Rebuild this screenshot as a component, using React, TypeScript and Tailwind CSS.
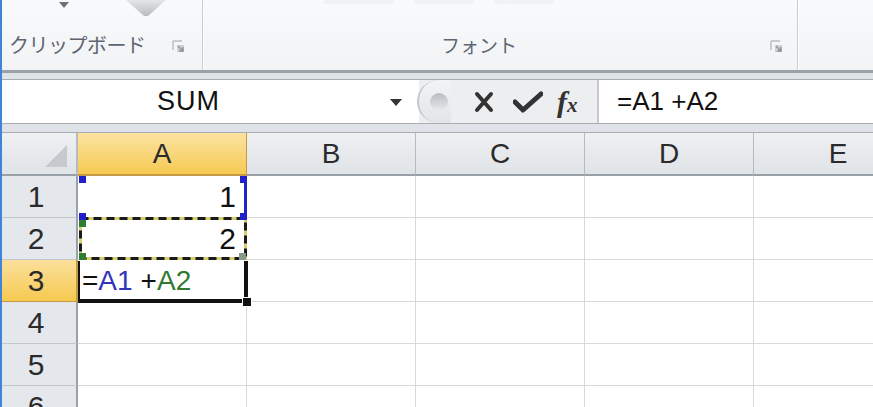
import React from "react";

const cols = ["A", "B", "C", "D", "E"];
const rows = [1, 2, 3, 4, 5, 6];

function Launcher() {
  return (
    <svg width="13" height="13" viewBox="0 0 13 13">
      <path d="M1 1h9M1 1v9" stroke="#b9bec5" strokeWidth="1.5" fill="none" />
      <rect x="5" y="5" width="7" height="7" fill="#cfd3d8" />
      <path d="M6 6l5 5M11 7v4H7" stroke="#8a9099" strokeWidth="1.4" fill="none" />
    </svg>
  );
}

function Ribbon() {
  return (
    <div className="flex h-[70px] bg-gradient-to-b from-[#f9fafb] to-[#f1f3f5]">
      {/* Clipboard group */}
      <div className="relative w-[200px] flex flex-col">
        <div className="h-[30px] relative">
          <svg className="absolute left-[57px] top-[2px]" width="10" height="6" viewBox="0 0 10 6">
            <path d="M0 0h10L5 6z" fill="#6b7079" />
          </svg>
          <svg className="absolute left-[124px] top-0" width="40" height="17" viewBox="0 0 40 17">
            <defs>
              <linearGradient id="pg" x1="0" y1="0" x2="0" y2="1">
                <stop offset="0" stopColor="#e4e6e8" />
                <stop offset="1" stopColor="#b9bcc0" />
              </linearGradient>
            </defs>
            <path d="M0 0h40L22 16h-4z" fill="url(#pg)" />
          </svg>
        </div>
        <div className="flex items-center h-[30px] pl-[7px]">
          <span
            className="text-[20px] text-[#5e6572] tracking-[-0.5px]"
            style={{ fontFamily: '"Noto Sans CJK JP", sans-serif' }}
          >
            クリップボード
          </span>
          <div className="ml-[26px] mt-[2px]">
            <Launcher />
          </div>
        </div>
      </div>
      <div className="w-[2px] h-[70px] border-l border-[#c9cdd2] bg-white" />
      {/* Font group */}
      <div className="relative w-[593px] flex flex-col">
        <div className="h-[30px] flex items-start gap-[20px] pl-[120px]">
          <div className="w-[70px] h-[4px] bg-[#f1f2f4]" />
          <div className="w-[60px] h-[4px] bg-[#f1f2f4]" />
          <div className="w-[60px] h-[4px] bg-[#f1f2f4]" />
        </div>
        <div className="flex items-center h-[30px]">
          <span
            className="ml-[237px] text-[19px] text-[#5e6572]"
            style={{ fontFamily: '"Noto Sans CJK JP", sans-serif' }}
          >
            フォント
          </span>
          <div className="ml-[253px] mt-[2px]">
            <Launcher />
          </div>
        </div>
      </div>
      <div className="w-[2px] h-[70px] border-l border-[#c9cdd2] bg-white" />
      <div className="flex-1" />
    </div>
  );
}

function FormulaBar() {
  return (
    <div
      className="flex h-[45px] bg-white border-y border-[#a8adb4]"
      style={{ fontFamily: '"Liberation Sans", Arial, sans-serif' }}
    >
      <div className="w-[403px] flex items-center relative">
        <span className="flex-1 text-center text-[27px] text-[#111] tracking-[1px] pr-[30px]">SUM</span>
        <svg className="absolute right-[3px] top-[19px]" width="12" height="7" viewBox="0 0 12 7">
          <path d="M0 0h12L6 7z" fill="#333" />
        </svg>
      </div>
      <div className="w-[14px] bg-white" />
      <div className="w-[178px] flex items-center bg-[#eceef0] relative">
        <div className="absolute -left-[2px] top-0 h-[43px] w-[34px] rounded-l-full border-l-2 border-[#c4c8cd] bg-gradient-to-b from-[#f3f4f5] to-[#e2e4e7] flex items-center justify-center">
          <div className="w-[18px] h-[18px] rounded-full bg-gradient-to-b from-[#b8bcc1] to-[#e9ebed] ml-[8px]" />
        </div>
        <svg className="ml-[55px]" width="20" height="22" viewBox="0 0 20 22">
          <path d="M3 3l14 16M17 3L3 19" stroke="#333" strokeWidth="4" strokeLinecap="round" />
        </svg>
        <svg className="ml-[19px]" width="30" height="22" viewBox="0 0 30 22">
          <path d="M2 11l8 8L28 3" stroke="#2f3337" strokeWidth="5" fill="none" strokeLinecap="round" strokeLinejoin="round" />
        </svg>
        <span
          className="ml-[14px] text-[30px] italic font-bold text-[#333] leading-none"
          style={{ fontFamily: '"Liberation Serif", serif' }}
        >
          f<span className="text-[21px]">x</span>
        </span>
      </div>
      <div className="w-[2px] bg-[#c5c9ce]" />
      <div className="flex-1 flex items-center pl-[18px] text-[26px] text-[#111]">
        =A1&nbsp;+A2
      </div>
    </div>
  );
}

function ColHeader({ c }: { c: string }) {
  const sel = c === "A";
  return (
    <div
      className={
        sel
          ? "flex items-center justify-center border-r border-b-2 border-[#c49b44] bg-gradient-to-b from-[#fbe3a0] to-[#f6c94e] text-[28px] text-[#2a2a2a]"
          : "flex items-center justify-center border-r border-b-2 border-r-[#b6bbc1] border-b-[#9aa0a7] bg-gradient-to-b from-[#eef0f2] to-[#e0e3e7] text-[28px] text-[#2a2a2a]"
      }
    >
      {c}
    </div>
  );
}

function RowHeader({ r }: { r: number }) {
  const sel = r === 3;
  return (
    <div
      className={
        sel
          ? "flex items-center justify-center pr-[6px] border-r-2 border-b border-[#c49b44] bg-gradient-to-b from-[#fbe09a] to-[#f6c94e] text-[30px] text-[#2a2a2a]"
          : "flex items-center justify-center pr-[6px] border-r-2 border-b border-r-[#9aa0a7] border-b-[#c3c8ce] bg-[#e4e7eb] text-[30px] text-[#2a2a2a]"
      }
    >
      {r}
    </div>
  );
}

function Handle({ className }: { className: string }) {
  return <div className={"absolute z-20 w-[7px] h-[7px] " + className} />;
}

function Cell({ r, c }: { r: number; c: string }) {
  const base = "relative border-r border-b border-[#d9d9d9] bg-white";
  if (c === "A" && r === 1) {
    return (
      <div className={base + " flex items-center justify-end pr-[10px] text-[30px] text-[#111]"}>
        1
        <div className="absolute z-20 right-[-1px] top-0 bottom-0 w-[3px] bg-[#2323c8]" />
        <Handle className="left-[1px] top-0 bg-[#2020c8]" />
        <Handle className="right-[-1px] top-0 bg-[#2020c8]" />
        <Handle className="left-[1px] bottom-[-3px] bg-[#2020c8]" />
        <Handle className="right-[-1px] bottom-[-3px] bg-[#2020c8]" />
      </div>
    );
  }
  if (c === "A" && r === 2) {
    return (
      <div className={base + " flex items-center justify-end pr-[10px] text-[30px] text-[#111]"}>
        2
        <svg className="absolute z-10 left-[1px] top-[-1px]" width="168" height="43" viewBox="0 0 168 43">
          <rect x="1.5" y="1.5" width="165" height="40" fill="none" stroke="#d8d070" strokeWidth="3" />
          <rect x="1.5" y="1.5" width="165" height="40" fill="none" stroke="#1a1a1a" strokeWidth="3" strokeDasharray="8 5" />
        </svg>
        <Handle className="left-[1px] top-[2px] w-[5px] h-[5px] bg-[#2e7d32]" />
        <Handle className="left-[1px] bottom-[-1px] w-[5px] h-[5px] bg-[#2e7d32]" />
        <Handle className="right-[0px] bottom-[-1px] w-[6px] h-[6px] bg-[#8a9a8a]" />
      </div>
    );
  }
  if (c === "A" && r === 3) {
    return (
      <div className={base + " flex items-center pl-[4px] text-[28px] text-[#111]"}>
        <span>=</span>
        <span className="text-[#3434b8]">A1</span>
        <span className="ml-[8px]">+</span>
        <span className="text-[#2f7a30]">A2</span>
        <div className="absolute z-20 left-[0px] top-[1px] right-[-2px] bottom-[-2px] border-l-2 border-r-[4px] border-b-[4px] border-[#111]" />
        <div className="absolute z-20 right-[-6px] bottom-[-6px] w-[10px] h-[10px] bg-[#111] border border-white" />
      </div>
    );
  }
  return <div className={base} />;
}

export default function App() {
  return (
    <div
      className="w-[873px] h-[407px] overflow-hidden border-l-2 border-[#3f84d8] bg-[#dfe2e6]"
      style={{ fontFamily: '"Liberation Sans", Arial, sans-serif' }}
    >
      <Ribbon />
      <div className="h-[3px] bg-[#9ba1a8]" />
      <div className="h-[6px] bg-[#dfe2e6]" />
      <FormulaBar />
      <div className="h-[9px] bg-[#dfe2e6] border-b border-[#a8adb4]" />
      <div className="grid grid-cols-[76px_169px_169px_169px_169px_169px] grid-rows-[43px_42px_42px_42px_42px_42px_42px]">
        <div className="relative border-r-2 border-b-2 border-r-[#b6bbc1] border-b-[#9aa0a7] bg-gradient-to-b from-[#eef0f2] to-[#e0e3e7]">
          <svg className="absolute right-[9px] bottom-[7px]" width="22" height="22" viewBox="0 0 22 22">
            <path d="M22 0v22H0z" fill="#c6cacf" />
          </svg>
        </div>
        {cols.map((c) => (
          <ColHeader key={c} c={c} />
        ))}
        {rows.map((r) => (
          <React.Fragment key={r}>
            <RowHeader r={r} />
            {cols.map((c) => (
              <Cell key={c + r} r={r} c={c} />
            ))}
          </React.Fragment>
        ))}
      </div>
    </div>
  );
}
